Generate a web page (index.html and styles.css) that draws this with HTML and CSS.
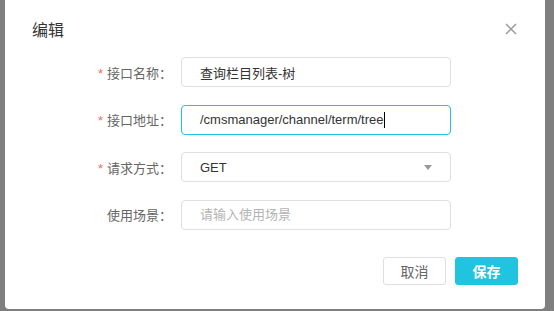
FILE: index.html
```html
<!DOCTYPE html>
<html lang="zh-CN">
<head>
    <title>编辑</title>
    <meta http-equiv="Content-Type" content="text/html; charset=UTF-8"/>
    <link rel="stylesheet" href="styles.css">
</head>
<body>
<div class="dialog">
    <div class="dialog-header">
        <span class="dialog-title">编辑</span>
        <span class="dialog-close">
            <svg width="12" height="12" viewBox="0 0 12 12"><path d="M1 1 L11 11 M11 1 L1 11" stroke="#999" stroke-width="1.5" fill="none"/></svg>
        </span>
    </div>
    <div class="form">
        <div class="form-item">
            <label class="form-label"><span class="required">*</span>接口名称<span class="colon">：</span></label>
            <input type="text" class="form-input" value="查询栏目列表-树">
        </div>
        <div class="form-item">
            <label class="form-label"><span class="required">*</span>接口地址<span class="colon">：</span></label>
            <div class="form-input is-focus">
                <span>/cmsmanager/channel/term/tree</span><span class="caret"></span>
            </div>
        </div>
        <div class="form-item">
            <label class="form-label"><span class="required">*</span>请求方式<span class="colon">：</span></label>
            <div class="form-input form-select">
                <span>GET</span>
                <span class="select-arrow"></span>
            </div>
        </div>
        <div class="form-item">
            <label class="form-label">使用场景<span class="colon">：</span></label>
            <input type="text" class="form-input" placeholder="请输入使用场景">
        </div>
    </div>
    <div class="dialog-footer">
        <button class="btn btn-default">取消</button>
        <button class="btn btn-primary">保存</button>
    </div>
</div>
</body>
</html>
```

FILE: styles.css
```css
body {
    background-color: #7f7f7f;
    margin: 0;
    padding: 0;
    font-family: "Liberation Sans", "Noto Sans CJK SC", sans-serif;
}
.dialog {
    width: 540px;
    height: 309px;
    margin-left: 5px;
    background-color: #ffffff;
    border-radius: 0 0 4px 4px;
    box-sizing: border-box;
    padding: 20px 27px 25px 27px;
}
.dialog-header {
    display: flex;
    align-items: center;
    justify-content: space-between;
    height: 22px;
}
.dialog-title {
    font-size: 16px;
    color: #333333;
    line-height: 22px;
}
.dialog-close {
    display: flex;
    margin-right: 1px;
    margin-top: -4px;
}
.form {
    margin-top: 15px;
    display: flex;
    flex-direction: column;
    gap: 17.5px;
}
.form-item {
    display: flex;
    align-items: center;
}
.form-label {
    width: 149px;
    padding-right: 9px;
    box-sizing: border-box;
    text-align: right;
    font-size: 13px;
    color: #666666;
}
.colon {
    font-family: "Noto Sans CJK TC", sans-serif;
}
.required {
    color: #f56c6c;
    margin-right: 4px;
}
.form-input {
    width: 270px;
    height: 30px;
    box-sizing: border-box;
    border: 1px solid #dcdfe6;
    border-radius: 4px;
    padding: 0 17px 0 18px;
    font-size: 13px;
    font-family: "Liberation Sans", "Noto Sans CJK SC", sans-serif;
    color: #333333;
    outline: none;
    display: flex;
    align-items: center;
}
.form-input::placeholder {
    color: #b4b4b4;
}
.form-input.is-focus {
    border-color: #20c4df;
}
.caret {
    width: 1px;
    height: 16px;
    background-color: #000000;
}
.form-select {
    justify-content: space-between;
}
.select-arrow {
    width: 0;
    height: 0;
    border-left: 4px solid transparent;
    border-right: 4px solid transparent;
    border-top: 5px solid #999999;
    margin-right: 1px;
}
.dialog-footer {
    display: flex;
    justify-content: flex-end;
    gap: 9px;
    margin-top: 27px;
}
.btn {
    width: 63px;
    height: 28px;
    border-radius: 3px;
    font-size: 14px;
    font-family: "Liberation Sans", "Noto Sans CJK SC", sans-serif;
    cursor: pointer;
}
.btn-default {
    background-color: #ffffff;
    border: 1px solid #dcdfe6;
    color: #666666;
}
.btn-primary {
    background-color: #20c4df;
    border: 1px solid #20c4df;
    color: #ffffff;
    font-weight: bold;
}
```
